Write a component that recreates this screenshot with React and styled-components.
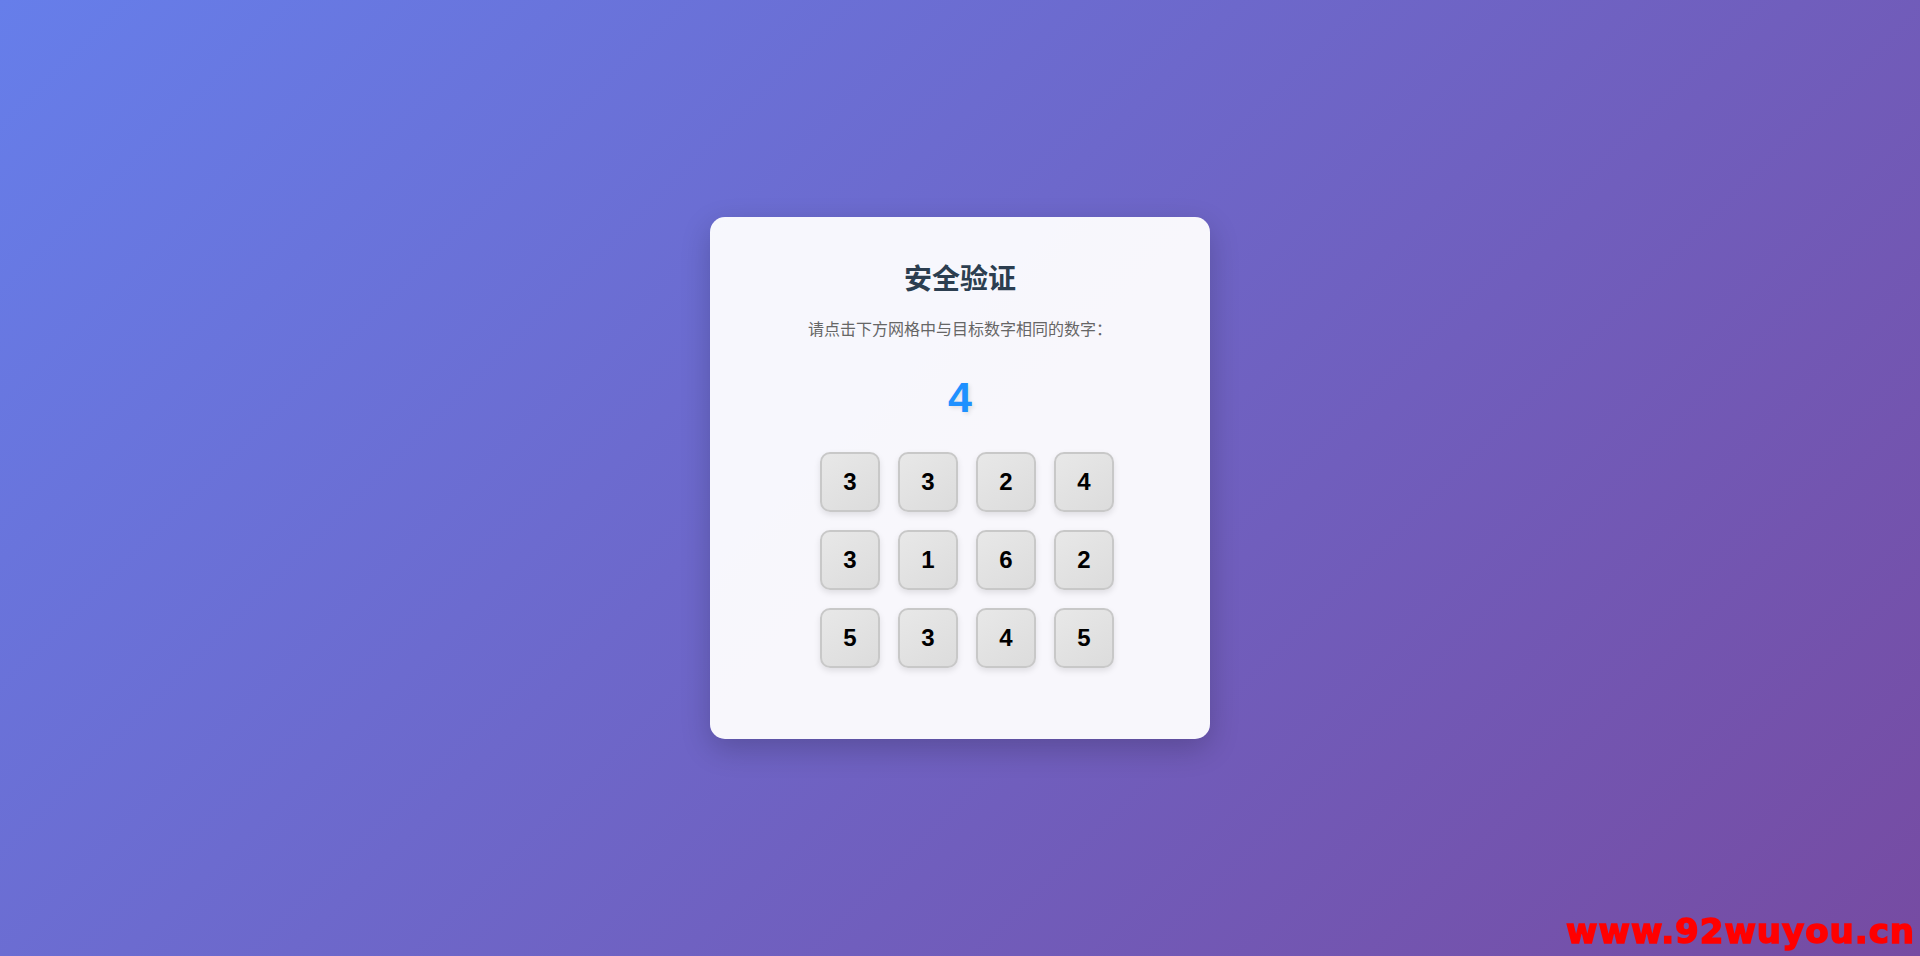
import React from "react";
import styled, { createGlobalStyle } from "styled-components";

const Global = createGlobalStyle`
  * { box-sizing: border-box; }
  html, body { margin: 0; padding: 0; }
  body {
    min-height: 100vh;
    background: linear-gradient(135deg, #667eea 0%, #764ba2 100%);
    font-family: "Liberation Sans", Arial, "Noto Sans CJK SC", sans-serif;
  }
`;

const Page = styled.div`
  min-height: 100vh;
  display: flex;
  align-items: center;
  justify-content: center;
`;

const Card = styled.div`
  width: 500px;
  padding: 40px 40px 71px;
  background: rgba(255, 255, 255, 0.95);
  border-radius: 15px;
  box-shadow: 0 10px 30px rgba(0, 0, 0, 0.2);
  display: flex;
  flex-direction: column;
  align-items: center;
  text-align: center;
`;

const Title = styled.h2`
  margin: 0;
  font-size: 28px;
  line-height: 40px;
  font-weight: 700;
  color: #2c3e50;
  font-family: "Noto Sans CJK SC", sans-serif;
`;

const Subtitle = styled.p`
  margin: 19px 0 0;
  font-size: 16px;
  line-height: 24px;
  color: #666;
  font-family: "Noto Sans CJK SC", sans-serif;
`;

const Target = styled.div`
  margin-top: 33px;
  font-size: 43px;
  line-height: 48px;
  font-weight: 700;
  color: #1e90ff;
  text-shadow: 2px 2px 4px rgba(0, 0, 0, 0.1);
`;

const Grid = styled.div`
  margin-top: 31px;
  margin-left: 14px;
  display: grid;
  grid-template-columns: repeat(4, 60px);
  grid-auto-rows: 60px;
  gap: 18px;
`;

const Cell = styled.button`
  width: 60px;
  height: 60px;
  padding: 0;
  border: 2px solid #c8c8c8;
  border-radius: 10px;
  background: linear-gradient(145deg, #e8e8e8, #dcdcdc);
  box-shadow: 0 3px 6px rgba(0, 0, 0, 0.1);
  font-family: "Liberation Sans", Arial, sans-serif;
  font-size: 24px;
  font-weight: 700;
  color: #000;
  cursor: pointer;
  display: flex;
  align-items: center;
  justify-content: center;
`;

const Watermark = styled.div`
  position: fixed;
  right: 5px;
  bottom: 8px;
  color: #ff0000;
  font-family: "DejaVu Sans", sans-serif;
  font-weight: 900;
  font-size: 34px;
  line-height: 1;
  letter-spacing: 1px;
  -webkit-text-stroke: 1.5px #ff0000;
  pointer-events: none;
`;

const numbers = [3, 3, 2, 4, 3, 1, 6, 2, 5, 3, 4, 5];

export default function App() {
  return (
    <>
      <Global />
      <Page>
        <Card>
          <Title>安全验证</Title>
          <Subtitle>请点击下方网格中与目标数字相同的数字：</Subtitle>
          <Target>4</Target>
          <Grid>
            {numbers.map((n, i) => (
              <Cell key={i}>{n}</Cell>
            ))}
          </Grid>
        </Card>
      </Page>
      <Watermark>www.92wuyou.cn</Watermark>
    </>
  );
}
